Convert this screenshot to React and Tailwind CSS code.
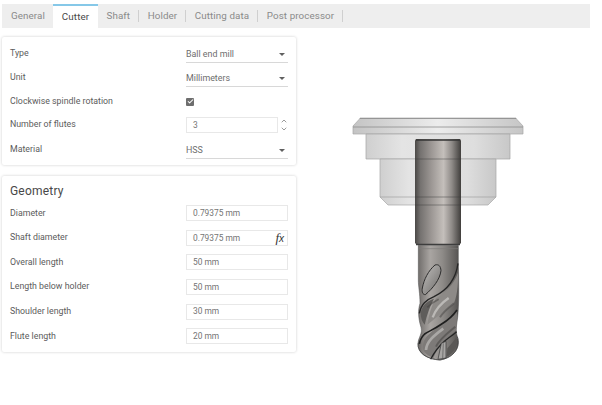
import React from 'react';
import { ChevronUp, ChevronDown, Check } from 'lucide-react';

const tabs = ['Shaft', 'Holder', 'Cutting data', 'Post processor'];

const geometry = [
  { label: 'Diameter', value: '0.79375 mm' },
  { label: 'Shaft diameter', value: '0.79375 mm', fx: true },
  { label: 'Overall length', value: '50 mm' },
  { label: 'Length below holder', value: '50 mm' },
  { label: 'Shoulder length', value: '30 mm' },
  { label: 'Flute length', value: '20 mm' },
];

const Row = ({ label, children, className = 'h-[24px]' }) => (
  <div className={`flex items-center pl-[8px] pr-[8px] ${className}`}>
    <span className="w-[176px] text-[8.8px] text-[#5c5c5c]">{label}</span>
    <div className="flex-1 flex items-center relative">{children}</div>
  </div>
);

const Select = ({ value }) => (
  <div className="w-full h-[17px] pt-[2px] flex items-center justify-between border-b border-[#d8d8d8] pr-[2px]">
    <span className="text-[8.9px] text-[#6e6e6e]">{value}</span>
    <span className="w-0 h-0 border-l-[3.5px] border-r-[3.5px] border-t-[3.5px] border-l-transparent border-r-transparent border-t-[#606060] mr-[1px]" />
  </div>
);

const Field = ({ value, fx, className = 'w-full' }) => (
  <div className={`h-[16px] flex items-center justify-between border border-[#e8e8e8] pl-[6px] pr-[3px] ${className}`}>
    <span className="text-[8.4px] text-[#747474]">{value}</span>
    {fx && <span className="text-[13px] leading-none italic text-[#333333] font-['Liberation_Serif',serif]">f<span className="text-[10px] font-['Liberation_Sans',sans-serif]">x</span></span>}
  </div>
);

// Collet holder and ball end mill, drawn on page coordinates
const ToolDrawing = () => (
  <svg width="200" height="265" viewBox="340 105 200 265" className="ml-[44px] mt-[68px] shrink-0">
    <defs>
      <linearGradient id="holderTop" x1="0" x2="1" y1="0" y2="0">
        <stop offset="0" stopColor="#c4c4c4" />
        <stop offset="0.5" stopColor="#ececec" />
        <stop offset="1" stopColor="#c6c6c6" />
      </linearGradient>
      <linearGradient id="holderMid" x1="0" x2="1" y1="0" y2="0">
        <stop offset="0" stopColor="#cfcfcf" />
        <stop offset="0.25" stopColor="#e4e4e4" />
        <stop offset="0.75" stopColor="#dedede" />
        <stop offset="1" stopColor="#c8c8c8" />
      </linearGradient>
      <linearGradient id="shank" x1="0" x2="1" y1="0" y2="0">
        <stop offset="0" stopColor="#4a4846" />
        <stop offset="0.12" stopColor="#757270" />
        <stop offset="0.35" stopColor="#9b9693" />
        <stop offset="0.62" stopColor="#c4bfbb" />
        <stop offset="0.8" stopColor="#8f8b88" />
        <stop offset="1" stopColor="#403e3c" />
      </linearGradient>
      <linearGradient id="body" x1="0" x2="1" y1="0" y2="0">
        <stop offset="0" stopColor="#6f6c6a" />
        <stop offset="0.3" stopColor="#a9a5a2" />
        <stop offset="0.6" stopColor="#8e8b88" />
        <stop offset="1" stopColor="#565452" />
      </linearGradient>
      <linearGradient id="fluteFace" x1="0" x2="1" y1="0" y2="1">
        <stop offset="0" stopColor="#c4c2c0" />
        <stop offset="1" stopColor="#6a6866" />
      </linearGradient>
    </defs>

    {/* holder */}
    <path d="M360 118 H516 L516.5 119 L523 126 V134 H353 V126 L359.5 119 Z" fill="url(#holderTop)" stroke="#a8a8a8" strokeWidth="0.7" />
    <path d="M353 127 H523" stroke="#8e8e8e" strokeWidth="0.8" />
    <path d="M360 118.5 H516" stroke="#8a8a8a" strokeWidth="0.8" />
    <path d="M366 134 H510 V159 H366 Z" fill="url(#holderMid)" stroke="#a4a4a4" strokeWidth="0.7" />
    <path d="M380 159 H496 V197 L488 205 H388 L380 197 Z" fill="url(#holderMid)" stroke="#a8a8a8" strokeWidth="0.7" />
    <path d="M380 197 H496" stroke="#a0a0a0" strokeWidth="0.7" />

    {/* shank */}
    <path d="M415 141 Q415 139 417 139 H459 Q461 139 461 141 V243 L459 245 H417 L415 243 Z" fill="url(#shank)" />
    <path d="M416 140 H460" stroke="#333333" strokeWidth="1.6" />
    <path d="M415 159 H461 M415 197 H461 M415 205 H461" stroke="#3a3a3a" strokeWidth="0.6" opacity="0.75" />
    <path d="M416 244.5 H460" stroke="#3c3c3c" strokeWidth="1.4" />

    {/* cutter, path units are 3x with origin at 390,230 */}
    <g transform="translate(390 230) scale(0.3333)">
      <path d="M85 46 H205 V100 C207 170 207 225 203 262 C200 285 196 300 202 320 C212 350 195 382 150 390 C112 388 82 370 84 340 C85 322 98 312 93 292 C84 262 84 240 90 220 C90 190 85 170 85 150 Z" fill="url(#body)" stroke="#4a4a4a" strokeWidth="1.5" />
      <path d="M85 56 H205" stroke="#7e7c7a" strokeWidth="2" />

      {/* upper lobe faces */}
      <path d="M92 250 C96 226 110 214 132 206 C120 228 110 256 104 284 C96 276 92 264 92 250 Z" fill="#5f5d5b" />
      <path d="M138 205 C165 190 190 165 204 128 C205 170 200 205 190 222 C165 240 140 262 112 284 C116 255 124 228 138 205 Z" fill="#8d8a87" />
      <path d="M128 262 C136 240 150 222 176 204" fill="none" stroke="#dad8d6" strokeWidth="7" opacity="0.6" />
      <path d="M150 262 C160 246 172 236 192 220" fill="none" stroke="#4c4a48" strokeWidth="6" opacity="0.55" />
      <path d="M112 232 C122 222 130 216 146 208" fill="none" stroke="#3f3d3c" strokeWidth="5" opacity="0.5" />

      {/* lower lobe faces */}
      <path d="M100 340 C104 322 118 310 150 286 C175 270 190 256 201 240 C202 265 200 285 198 302 C175 320 150 335 130 384 C108 376 92 360 100 340 Z" fill="#7d7a78" />
      <path d="M108 360 C110 335 130 318 160 296" fill="none" stroke="#c8c6c4" strokeWidth="8" opacity="0.6" />
      <path d="M138 350 C150 325 172 310 196 290" fill="none" stroke="#454341" strokeWidth="6" opacity="0.55" />
      <path d="M172 355 C182 345 192 332 199 322 C205 345 195 368 170 381 Z" fill="#5a5856" />

      {/* flute edges */}
      <path d="M135 105 C146 102 152 108 153 122 C150 148 128 176 106 194 C98 194 95 186 97 174 C102 148 115 122 135 105 Z" fill="url(#fluteFace)" stroke="#2c2c2c" strokeWidth="3" />
      <path d="M204 100 C198 145 172 180 132 200 C108 210 94 222 88 250" fill="none" stroke="#262626" strokeWidth="4" />
      <path d="M201 240 C190 256 175 270 155 282 C132 298 116 304 104 312 C96 320 90 328 88 342" fill="none" stroke="#1f1f1f" strokeWidth="5" />
      <path d="M200 305 C185 318 175 324 165 332 C150 345 135 362 122 388" fill="none" stroke="#242424" strokeWidth="4" />
      <path d="M154 340 L168 334 L168 384 L144 388 Z" fill="#a8a6a4" stroke="#333333" strokeWidth="2" />
      <path d="M160 340 L158 386" stroke="#555555" strokeWidth="2" />
      <path d="M84 340 C82 370 112 388 150 390 C195 382 212 350 202 320" fill="none" stroke="#3a3a3a" strokeWidth="2" />
    </g>
  </svg>
);

export default function App() {
  return (
    <div className="w-[602px] h-[405px] bg-white pt-[4px] pl-[2px] overflow-hidden font-['Roboto','Noto_Sans',sans-serif]">
      {/* Tab strip */}
      <div className="w-[588px] h-[24px] bg-[#eeeeee] flex items-center text-[9.8px] text-[#8a8a8a] tracking-[0.1px]">
        <div className="w-[51px] pl-[9px]">General</div>
        <div className="w-[45px] h-full bg-white border-t-2 border-[#86c8e8] flex items-center justify-center text-[#484848]">Cutter</div>
        {tabs.map((tab) => (
          <div key={tab} className="flex items-center pl-[8.5px]">
            <span>{tab}</span>
            <span className="ml-[8px] w-px h-[12px] bg-[#cfcfcf]" />
          </div>
        ))}
      </div>

      <div className="flex mt-[9px]">
        <div className="w-[294px] flex flex-col gap-[11px] shrink-0">
          {/* Cutter properties */}
          <section className="h-[128px] py-[4px] bg-white rounded-[2px] shadow-[0_0_3px_rgba(0,0,0,0.2)]">
            <Row label="Type" className="h-[24px] pt-[2px]"><Select value="Ball end mill" /></Row>
            <Row label="Unit" className="h-[24px] pt-[2px]"><Select value="Millimeters" /></Row>
            <Row label="Clockwise spindle rotation" className="h-[24px] pt-[1px]">
              <span className="w-[8px] h-[8px] bg-[#6e6e6e] flex items-center justify-center rounded-[1px]">
                <Check size={7} strokeWidth={3.5} className="text-white" />
              </span>
            </Row>
            <Row label="Number of flutes">
              <Field value="3" className="w-[92px]" />
              <div className="flex flex-col ml-[2px] text-[#666666]">
                <ChevronUp size={8} strokeWidth={2} />
                <ChevronDown size={8} strokeWidth={2} />
              </div>
            </Row>
            <Row label="Material" className="h-[24px] pt-[2px]"><Select value="HSS" /></Row>
          </section>

          {/* Geometry */}
          <section className="h-[176px] bg-white rounded-[2px] shadow-[0_0_3px_rgba(0,0,0,0.2)]">
            <h2 className="h-[25px] pl-[8px] pt-[6px] text-[12px] leading-[18px] text-[#484848] tracking-[0.2px]">Geometry</h2>
            {geometry.map((row) => (
              <Row key={row.label} label={row.label} className="h-[24.6px]">
                <Field value={row.value} fx={row.fx} />
              </Row>
            ))}
          </section>
        </div>
        <ToolDrawing />
      </div>
    </div>
  );
}
